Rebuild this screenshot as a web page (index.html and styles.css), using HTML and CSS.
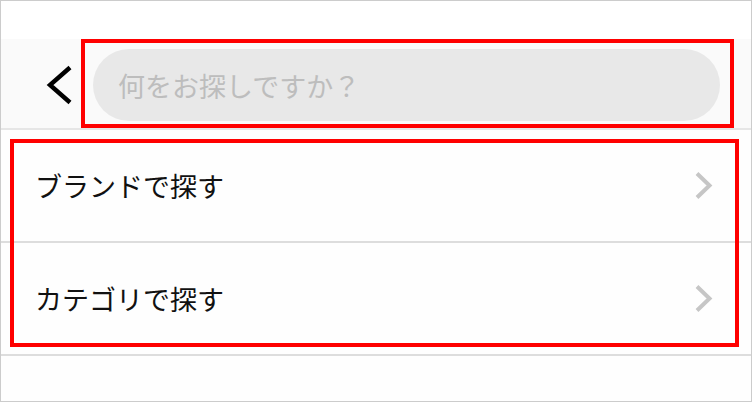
FILE: index.html
```html
<!DOCTYPE html>
<html lang="ja">
<head>
  <meta charset="UTF-8">
  <title>検索</title>
  <link rel="stylesheet" href="styles.css">
</head>
<body>

  <div class="screen">
    <div class="status-bar"></div>

    <!-- Search header -->
    <div class="search-header">
      <button type="button" class="back-btn" aria-label="戻る">
        <svg width="27" height="40" viewBox="0 0 27 40">
          <polyline points="24,2.5 4,20 24,37.5" fill="none" stroke="#000" stroke-width="4.4" />
        </svg>
      </button>
      <div class="search-pill">
        <input type="text" class="search-input" placeholder="何をお探しですか？">
      </div>
    </div>

    <!-- Search menu -->
    <ul class="menu-list">
      <li class="menu-row">
        <span class="menu-label">ブランドで探す</span>
        <svg class="menu-arrow" width="19" height="29" viewBox="0 0 19 29">
          <polyline points="3,2.5 15.5,14.5 3,26.5" fill="none" stroke="#c6c6c6" stroke-width="4" />
        </svg>
      </li>
      <li class="menu-row">
        <span class="menu-label">カテゴリで探す</span>
        <svg class="menu-arrow" width="19" height="29" viewBox="0 0 19 29">
          <polyline points="3,2.5 15.5,14.5 3,26.5" fill="none" stroke="#c6c6c6" stroke-width="4" />
        </svg>
      </li>
    </ul>

    <!-- Annotation boxes -->
    <div class="mark mark-search"></div>
    <div class="mark mark-menu"></div>
  </div>

</body>
</html>
```

FILE: styles.css
```css
* {
  box-sizing: border-box;
}

body {
  margin: 0;
  padding: 0;
  background: white;
  font-family: "Noto Sans CJK JP", "Noto Sans", sans-serif;
}

.screen {
  position: relative;
  width: 752px;
  height: 402px;
  border: 1px solid #cccccc;
  background: #fefefe;
  overflow: hidden;
}

.status-bar {
  height: 38px;
  background: #ffffff;
}

.search-header {
  display: flex;
  align-items: flex-start;
  height: 91px;
  padding: 10px 31px 0 0;
  background: #fafafa;
  border-bottom: 2px solid #e6e6e6;
}

.back-btn {
  width: 92px;
  height: 72px;
  padding: 0 0 0 45px;
  border: none;
  background: none;
  display: flex;
  align-items: center;
  cursor: pointer;
}

.search-pill {
  flex: 1;
  height: 72px;
  border-radius: 36px;
  background: #e8e8e8;
  display: flex;
  align-items: center;
  padding: 0 25px;
}

.search-input {
  width: 100%;
  border: none;
  outline: none;
  background: transparent;
  font-family: inherit;
  font-size: 27px;
  color: #333;
  padding: 0;
}

.search-input::placeholder {
  color: #bdbdbd;
}

.menu-list {
  list-style: none;
  margin: 0;
  padding: 0;
}

.menu-row {
  display: flex;
  align-items: center;
  justify-content: space-between;
  height: 113px;
  padding: 0 38px 0 34px;
  border-bottom: 2px solid #dddddd;
  background: #fefefe;
}

.menu-label {
  font-size: 27px;
  color: #111;
}

.mark {
  position: absolute;
  border: 4px solid #ff0000;
}

.mark-search {
  left: 80px;
  top: 38px;
  width: 653px;
  height: 89px;
}

.mark-menu {
  left: 9px;
  top: 138px;
  width: 729px;
  height: 208px;
}
```
